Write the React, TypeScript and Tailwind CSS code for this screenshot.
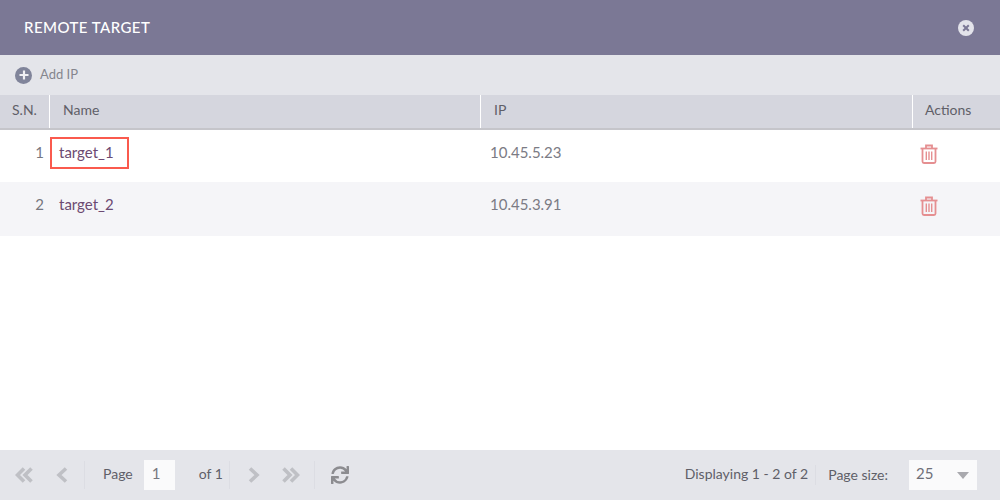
import { FaSync } from "react-icons/fa";

const rows = [
  { sn: 1, name: "target_1", ip: "10.45.5.23" },
  { sn: 2, name: "target_2", ip: "10.45.3.91" },
];

function Trash() {
  return (
    <svg width="18" height="20" viewBox="0 0 18 20" fill="none" stroke="#e58f91" strokeWidth="1.8">
      <path d="M0.5 4.5H17.5" />
      <path d="M6 4V1.5H12V4" />
      <path d="M2.5 4.5V17.5Q2.5 19 4 19H14Q15.5 19 15.5 17.5V4.5" />
      <path d="M6.3 7.5V16M9 7.5V16M11.7 7.5V16" strokeWidth="1.4" />
    </svg>
  );
}

function Chevron({ dir, double }: { dir: "left" | "right"; double?: boolean }) {
  const w = double ? 18 : 12;
  const paths = double ? ["M9 1.5L2.5 8L9 14.5", "M16.5 1.5L10 8L16.5 14.5"] : ["M10 1.5L3 8L10 14.5"];
  return (
    <svg
      width={w}
      height="16"
      viewBox={`0 0 ${w} 16`}
      fill="none"
      stroke="#bfc0c5"
      strokeWidth="3.6"
      className={dir === "right" ? "-scale-x-100" : ""}
    >
      {paths.map((d) => (
        <path key={d} d={d} />
      ))}
    </svg>
  );
}

function Divider() {
  return <div className="h-[28px] w-px bg-[#dcdde3]" />;
}

export default function App() {
  return (
    <div className="flex h-[500px] w-[1000px] flex-col bg-white font-['Lato',sans-serif] text-[14px] text-[#5f5f68]">
      <div className="flex h-[55px] items-center justify-between bg-[#7b7895] pl-[24px] pr-[26px]">
        <span className="text-[15px] font-medium tracking-[0.45px] text-white">REMOTE TARGET</span>
        <div className="flex h-[16px] w-[16px] items-center justify-center rounded-full bg-[#e3e3ea]">
          <svg width="8" height="8" viewBox="0 0 8 8" stroke="#7b7895" strokeWidth="2">
            <path d="M1.2 1.2L6.8 6.8M6.8 1.2L1.2 6.8" />
          </svg>
        </div>
      </div>

      <div className="flex h-[40px] items-center gap-[7px] bg-[#e4e5ea] pl-[15px]">
        <div className="flex h-[17px] w-[17px] items-center justify-center rounded-full bg-[#80849a]">
          <svg width="10" height="10" viewBox="0 0 10 10" stroke="#f0f0f4" strokeWidth="2.2">
            <path d="M5 0.5V9.5M0.5 5H9.5" />
          </svg>
        </div>
        <span className="ml-px text-[13px] text-[#85858e]">Add IP</span>
      </div>

      <div className="grid h-[35px] grid-cols-[50px_431px_432px_87px] border-b-2 border-[#c5c5ca] bg-[#d5d6de] text-[14px]">
        <div className="flex items-center border-r border-white pb-[4px] pl-[12px]">S.N.</div>
        <div className="flex items-center border-r border-white pb-[4px] pl-[13px]">Name</div>
        <div className="flex items-center border-r border-white pb-[4px] pl-[13px]">IP</div>
        <div className="flex items-center pb-[4px] pl-[12px]">Actions</div>
      </div>

      {rows.map((r, i) => (
        <div
          key={r.sn}
          className={`grid grid-cols-[50px_431px_432px_87px] ${i === 0 ? "h-[52px] bg-white" : "h-[54px] bg-[#f5f5f8]"}`}
        >
          <div className="flex items-start justify-end pr-[6px] pt-[11px] text-[15px] text-[#77777f]">{r.sn}</div>
          <div className="flex items-start pt-[7px]">
            <span
              className={`flex h-[32px] w-[79px] items-center border-2 pb-[2px] pl-[7px] text-[15px] text-[#6c4a72] ${i === 0 ? "border-[#fa5a4e]" : "border-transparent"}`}
            >
              {r.name}
            </span>
          </div>
          <div className="pl-[9px] pt-[11px] text-[15px] text-[#7b7b84]">{r.ip}</div>
          <div className="pl-[7px] pt-[14px]">
            <Trash />
          </div>
        </div>
      ))}

      <div className="flex-1" />

      <div className="flex h-[50px] items-center justify-between bg-[#e4e5ea] pl-[15px] pr-[23px]">
        <div className="flex items-center">
          <Chevron dir="left" double />
          <div className="ml-[23px]">
            <Chevron dir="left" />
          </div>
          <div className="ml-[16px]">
            <Divider />
          </div>
          <span className="mb-[4px] ml-[18px] text-[14px] text-[#5f5f68]">Page</span>
          <div className="ml-[11px] flex h-[30px] w-[31px] items-center bg-[#fafafb] pb-[3px] pl-[8px] text-[15px] text-[#77777f]">1</div>
          <span className="mb-[4px] ml-[24px] text-[14px] text-[#5f5f68]">of 1</span>
          <div className="ml-[6px]">
            <Divider />
          </div>
          <div className="ml-[18px]">
            <Chevron dir="right" />
          </div>
          <div className="ml-[22px]">
            <Chevron dir="right" double />
          </div>
          <div className="ml-[14px]">
            <Divider />
          </div>
          <FaSync className="ml-[16px] h-[18px] w-[18px] text-[#8c8c90]" />
        </div>
        <div className="flex items-center">
          <span className="mb-[4px] text-[14px] text-[#5f5f68]">Displaying 1 - 2 of 2</span>
          <div className="ml-[7px] h-[20px] w-px bg-[#dcdde3]" />
          <span className="mb-[2px] ml-[12px] text-[14px] text-[#5f5f68]">Page size:</span>
          <div className="ml-[21px] flex h-[30px] w-[68px] items-center justify-between bg-[#fafafb] pb-[4px] pl-[7px] pr-[8px] text-[15px] text-[#6f6f78]">
            <span>25</span>
            <div className="mt-[5px] h-0 w-0 border-x-[6.5px] border-t-[7px] border-x-transparent border-t-[#a9a9ae]" />
          </div>
        </div>
      </div>
    </div>
  );
}
